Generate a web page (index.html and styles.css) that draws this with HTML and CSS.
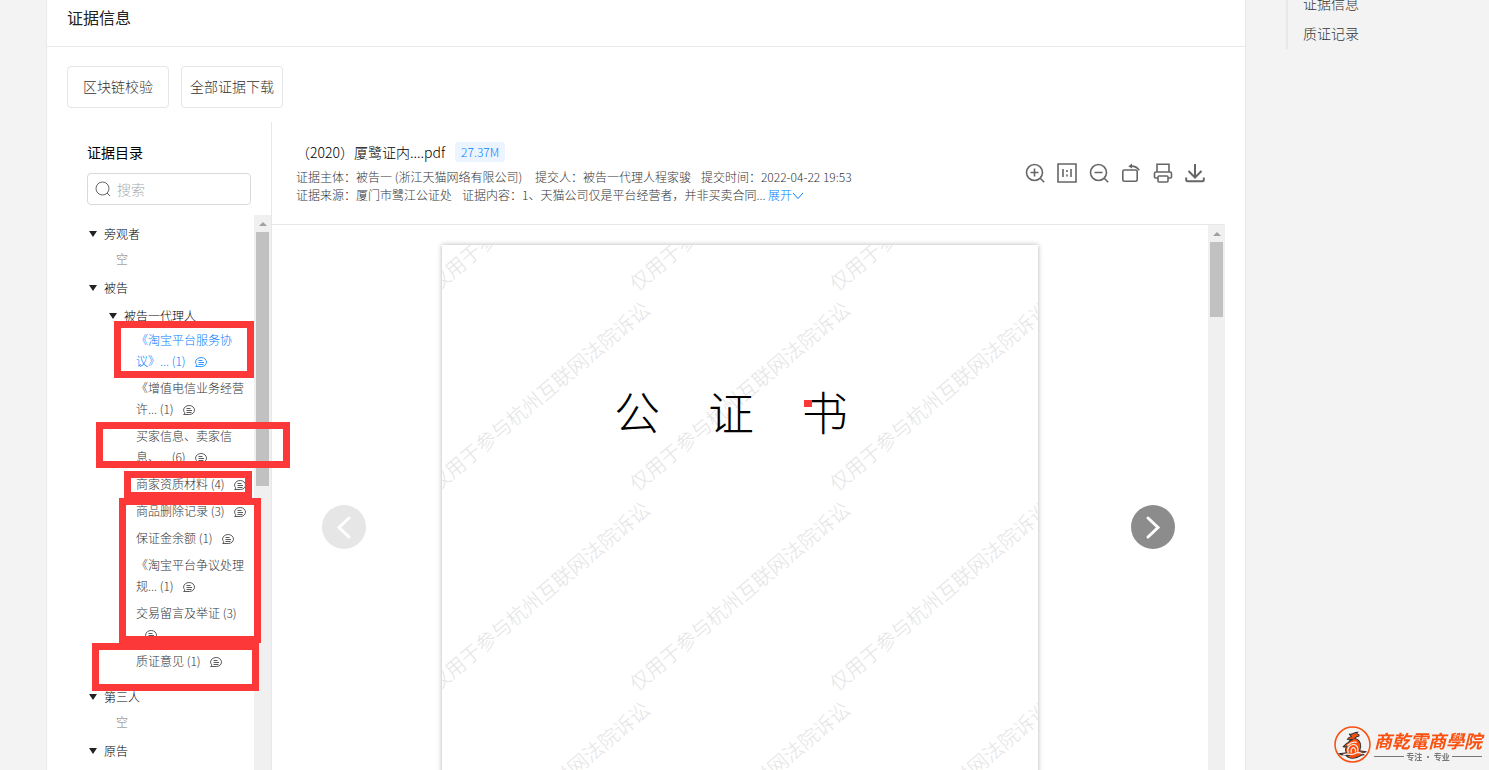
FILE: index.html
```html
<!DOCTYPE html>
<html lang="zh-CN">
<head>
    <meta charset="UTF-8">
    <meta name="viewport" content="width=device-width, initial-scale=1.0">
    <title>证据信息</title>
    <link rel="stylesheet" href="styles.css">
</head>
<body>
    <svg class="sprite" aria-hidden="true">
        <symbol id="icon-comment" viewBox="0 0 12 12">
            <path d="M.6 10.500h5.600c3.200 0 5.300-1.900 5.300-4.400S9.200 1.500 6.200 1.500.6 3.400.6 6c0 1.400.6 2.300 1.500 3.100L.6 10.500z" />
            <path d="M3.500 4.500h4M3.500 6.500h5.500M3.500 8.500h5" />
        </symbol>
    </svg>

    <main class="card">
        <h1 class="card-title">证据信息</h1>

        <div class="actions">
            <button class="btn">区块链校验</button>
            <button class="btn">全部证据下载</button>
        </div>

        <div class="evidence">
            <section class="catalog">
                <h2 class="catalog-title">证据目录</h2>
                <div class="search">
                    <svg class="search-icon" viewBox="0 0 16 16"><circle cx="7.500" cy="7.500" r="6.500" /><path d="M12 12l3 3" /></svg>
                    <input class="search-input" type="text" placeholder="搜索" aria-label="搜索">
                </div>

                <div class="catalog-body">
                    <div class="tree">
                        <button class="node">旁观者</button>
                        <p class="empty">空</p>
                        <button class="node">被告</button>
                        <button class="node node-sub">被告一代理人</button>
                        <ul class="files">
                            <li><a href="#" class="file active">《淘宝平台服务协<br>议》... (1)<svg class="comment"><use href="#icon-comment" /></svg></a></li>
                            <li><a href="#" class="file">《增值电信业务经营<br>许... (1)<svg class="comment"><use href="#icon-comment" /></svg></a></li>
                            <li><a href="#" class="file">买家信息、卖家信<br>息、... (6)<svg class="comment"><use href="#icon-comment" /></svg></a></li>
                            <li><a href="#" class="file">商家资质材料 (4)<svg class="comment"><use href="#icon-comment" /></svg></a></li>
                            <li><a href="#" class="file">商品删除记录 (3)<svg class="comment"><use href="#icon-comment" /></svg></a></li>
                            <li><a href="#" class="file">保证金余额 (1)<svg class="comment"><use href="#icon-comment" /></svg></a></li>
                            <li><a href="#" class="file">《淘宝平台争议处理<br>规... (1)<svg class="comment"><use href="#icon-comment" /></svg></a></li>
                            <li><a href="#" class="file">交易留言及举证 (3)<br><svg class="comment"><use href="#icon-comment" /></svg></a></li>
                            <li><a href="#" class="file">质证意见 (1)<svg class="comment"><use href="#icon-comment" /></svg></a></li>
                        </ul>
                        <button class="node node-after">第三人</button>
                        <p class="empty">空</p>
                        <button class="node">原告</button>
                    </div>
                    <div class="scrollbar">
                        <div class="scroll-thumb catalog-thumb"></div>
                    </div>
                </div>
            </section>

            <section class="viewer">
                <header class="viewer-header">
                    <div class="doc-info">
                        <div class="doc-name">
                            <h2>（2020）厦鹭证内....pdf</h2>
                            <span class="size">27.37M</span>
                        </div>
                        <p class="meta">
                            <span>证据主体：被告一 (浙江天猫网络有限公司)&nbsp;</span>
                            <span>提交人：被告一代理人程家骏</span>
                            <span>提交时间：2022-04-22 19:53</span>
                        </p>
                        <p class="meta">
                            <span>证据来源：厦门市鹭江公证处</span>
                            <span>证据内容：1、天猫公司仅是平台经营者，并非买卖合同... <a href="#" class="expand">展开<svg viewBox="0 0 12 12"><path d="M1 3l5 5.500L11 3" /></svg></a></span>
                        </p>
                    </div>
                    <div class="tools">
                        <button class="tool" aria-label="放大"><svg viewBox="0 0 20 20"><circle cx="9.500" cy="9.500" r="8" /><path d="M15.200 15.200l4 4M9.500 5.500v8M5.500 9.500h8" /></svg></button>
                        <button class="tool" aria-label="原始大小"><svg viewBox="0 0 20 20"><path d="M1 1h18v18H1zM6 6v8M14 6v8M10 7v2M10 11.500v2" /></svg></button>
                        <button class="tool" aria-label="缩小"><svg viewBox="0 0 20 20"><circle cx="9.500" cy="9.500" r="8" /><path d="M15.200 15.200l4 4M5.500 9.500h8" /></svg></button>
                        <button class="tool" aria-label="旋转"><svg viewBox="0 0 20 20"><rect x="1.800" y="7" width="14.400" height="11.200" rx="1.500" /><path d="M9 3.200c4-.5 7 .8 9.200 4" /><path class="solid" d="M7.300 3.200L11 .5v5z" /></svg></button>
                        <button class="tool" aria-label="打印"><svg viewBox="0 0 20 20"><path d="M4 9V1.200h12V9M5 15H2.500Q1.500 15 1.500 14v-3.500Q1.500 9 3 9h14q1.500 0 1.500 1.500V14q0 1-1 1H15" /><rect x="5" y="13" width="10" height="6" rx="1" /></svg></button>
                        <button class="tool" aria-label="下载"><svg class="bold" viewBox="0 0 20 20"><path d="M10 1v13M3.500 8l6.500 6.500L16.500 8M1.200 14.500v2.200q0 1.500 1.500 1.500h14.600q1.500 0 1.500-1.500v-2.200" /></svg></button>
                    </div>
                </header>

                <div class="viewer-body">
                    <div class="stage">
                        <article class="paper">
                            <svg class="watermark" viewBox="0 0 596 842" aria-hidden="true">
                                <defs>
                                    <text id="mark" transform="rotate(-40)" x="-10" y="6">仅用于参与杭州互联网法院诉讼</text>
                                </defs>
                                <use href="#mark" x="-1" y="36" />
                                <use href="#mark" x="199" y="36" />
                                <use href="#mark" x="399" y="36" />
                                <use href="#mark" x="-1" y="236" />
                                <use href="#mark" x="199" y="236" />
                                <use href="#mark" x="399" y="236" />
                                <use href="#mark" x="-1" y="436" />
                                <use href="#mark" x="199" y="436" />
                                <use href="#mark" x="399" y="436" />
                                <use href="#mark" x="-1" y="636" />
                                <use href="#mark" x="199" y="636" />
                                <use href="#mark" x="399" y="636" />
                            </svg>
                            <h3 class="paper-title"><span>公</span><span>证</span><span>书</span></h3>
                        </article>
                    </div>
                    <div class="scrollbar">
                        <div class="scroll-thumb viewer-thumb"></div>
                    </div>
                    <button class="pager prev" aria-label="上一份" disabled><svg viewBox="0 0 44 44"><path d="M27 13l-10 9.500L27 32" /></svg></button>
                    <button class="pager next" aria-label="下一份"><svg viewBox="0 0 44 44"><path d="M17 13l10 9.500L17 32" /></svg></button>
                </div>
            </section>
        </div>
    </main>

    <aside class="anchor">
        <nav class="anchor-nav">
            <a href="#">证据信息</a>
            <a href="#">质证记录</a>
        </nav>
    </aside>

    <!-- red highlights drawn over the page -->
    <div class="highlight highlight-1"></div>
    <div class="highlight highlight-2"></div>
    <div class="highlight highlight-3"></div>
    <div class="highlight highlight-4"></div>
    <div class="highlight highlight-5"></div>
    <div class="highlight-dot"></div>

    <div class="brand">
        <svg class="brand-logo" viewBox="0 0 36 36">
            <circle cx="18" cy="18" r="17" fill="none" stroke="#f9500f" stroke-width="1.500" />
            <path fill="#f9500f" d="M5 27c3-1 5 0 7-1-1-2-1-4 0-6-1 0-2 1-3 0 2-1 2-3 5-4 1-2 3-2 4-3-2 0-3 1-5 0 1-2 3-2 4-3-1-1-2-1-2-2 3 1 4-2 8-2-1 1-1 1 0 2 1 0 2 1 1 2-2 0-3 1-4 2 4 1 6 4 6 8l-1 4c2 1 4 0 6 1-2 1-4 1-5 2 1 0 2 0 3 1-3 0-5 2-8 3-3 1-7 0-9-2 2 0 3-1 4-1-4 0-8 1-11-1z" />
            <path fill="none" stroke="#f3f3f3" stroke-width="1.200" d="M14 26c-2-4 1-8 5-8 3 0 5 3 4 7M17 26c-1-2 0-5 2-5 1 0 2 2 2 4M13 19c3-3 6-4 9-3M9 28c5-2 8 1 11-1s5-1 8 0" />
        </svg>
        <div class="brand-text">
            <strong>商乾電商學院</strong>
            <small>专注 · 专业</small>
        </div>
    </div>
</body>
</html>
```
FILE: styles.css
```css
* {
    margin: 0;
    padding: 0;
    box-sizing: border-box;
}

body {
    display: flex;
    height: 100vh;
    overflow: hidden;
    background-color: #f3f3f3;
    color: #333333;
    font-family: "Noto Sans CJK SC", sans-serif;
    font-size: 12px;
    font-weight: 300;
}

button,
input {
    font: inherit;
    color: inherit;
    border: none;
    background: none;
}

button {
    cursor: pointer;
}

a {
    color: inherit;
    text-decoration: none;
}

svg {
    fill: none;
    stroke: currentColor;
}

.sprite {
    position: absolute;
    width: 0;
    height: 0;
}

/* card */
.card {
    flex: 1;
    min-width: 0;
    margin-left: 46px;
    display: flex;
    flex-direction: column;
    background-color: white;
    border: 1px solid #e8e8e8;
    border-width: 0 1px;
}

.card-title {
    padding: 0 20px 12px;
    line-height: 34px;
    font-size: 16px;
    font-weight: 400;
    color: #222222;
    border-bottom: 1px solid #e8e8e8;
}

.actions {
    display: flex;
    gap: 12px;
    padding: 19px 20px 14px;
}

.btn {
    width: 102px;
    height: 42px;
    padding-bottom: 2px;
    border: 1px solid #e6e6e6;
    border-radius: 4px;
    font-size: 14px;
    white-space: nowrap;
}

.evidence {
    flex: 1;
    min-height: 0;
    display: flex;
    padding: 0 20px;
}

/* catalog */
.catalog {
    width: 205px;
    flex-shrink: 0;
    display: flex;
    flex-direction: column;
    padding: 20px 0 0 20px;
    border-right: 1px solid #e8e8e8;
}

.catalog-title {
    line-height: 20px;
    font-size: 14px;
    font-weight: 400;
    color: black;
}

.search {
    display: flex;
    align-items: center;
    gap: 6px;
    height: 32px;
    margin: 11px 20px 10px 0;
    padding: 0 7px;
    border: 1px solid #d9d9d9;
    border-radius: 4px;
}

.search-icon {
    width: 16px;
    height: 16px;
    flex-shrink: 0;
    color: #666666;
}

.search-input {
    width: 100%;
    min-width: 0;
    font-size: 14px;
    outline: none;
}

.search-input::placeholder {
    color: #aaaaaa;
}

.catalog-body {
    flex: 1;
    min-height: 0;
    display: flex;
}

.tree {
    flex: 1;
    min-width: 0;
    padding-top: 8px;
    overflow: hidden;
}

.node {
    display: flex;
    align-items: center;
    gap: 7px;
    margin-top: 7px;
    padding-left: 2px;
    line-height: 22px;
    color: black;
}

.node::before {
    content: "";
    border: 4px solid transparent;
    border-top: 6px solid #222222;
    border-bottom: none;
}

.node:first-child {
    margin-top: 0;
}

.node-sub {
    margin-top: 6px;
    padding-left: 22px;
}

.node-after {
    margin-top: 11px;
}

.empty {
    margin-top: 3px;
    padding-left: 29px;
    line-height: 22px;
    color: #777777;
}

.files {
    list-style: none;
    padding-left: 49px;
}

.file {
    display: block;
    padding: 2px 0 4px;
    line-height: 21px;
    white-space: nowrap;
}

.active {
    color: #0080ff;
}

.comment {
    width: 12px;
    height: 12px;
    margin-left: 9px;
    vertical-align: -2px;
    opacity: 0.8;
}

/* scrollbars */
.scrollbar {
    width: 17px;
    flex-shrink: 0;
    display: flex;
    flex-direction: column;
    align-items: center;
    background-color: #f0f0f0;
}

.scrollbar::before {
    content: "";
    margin: 7px 0 6px;
    border: 4px solid transparent;
    border-top: none;
    border-bottom-color: #a0a0a0;
}

.scroll-thumb {
    width: 13px;
    background-color: #c1c1c1;
}

.catalog-thumb {
    height: 254px;
}

.viewer-thumb {
    height: 75px;
}

/* viewer */
.viewer {
    flex: 1;
    min-width: 0;
    display: flex;
    flex-direction: column;
}

.viewer-header {
    display: flex;
    justify-content: space-between;
    align-items: center;
    padding: 20px 20px 20px 24px;
    border-bottom: 1px solid #e8e8e8;
}

.doc-name {
    display: flex;
    align-items: flex-start;
    gap: 10px;
    height: 22px;
    margin-bottom: 4px;
}

.doc-name h2 {
    line-height: 20px;
    font-size: 14px;
    font-weight: 300;
    color: black;
}

.size {
    padding: 0 6px;
    line-height: 20px;
    border-radius: 4px;
    background-color: #ecf5ff;
    color: #0080ff;
}

.meta {
    display: flex;
    gap: 10px;
    line-height: 18px;
    white-space: nowrap;
}

.expand {
    color: #0080ff;
}

.expand svg {
    width: 12px;
    height: 12px;
    vertical-align: -2px;
}

.tools {
    display: flex;
    gap: 12px;
    color: #666666;
}

.tool,
.tool svg {
    display: block;
    width: 20px;
    height: 20px;
}

.tool svg {
    stroke-width: 1.6;
}

.tool .bold {
    stroke-width: 2;
}

.tool .solid {
    fill: currentColor;
    stroke: none;
}

.viewer-body {
    flex: 1;
    min-height: 0;
    display: flex;
    position: relative;
}

.stage {
    flex: 1;
    min-width: 0;
    display: flex;
    justify-content: center;
    padding-top: 20px;
    overflow: hidden;
}

.paper {
    position: relative;
    width: 596px;
    height: 842px;
    flex-shrink: 0;
    background-color: white;
    box-shadow: 0 0 5px rgba(0, 0, 0, 0.3);
}

.watermark {
    position: absolute;
    top: 0;
    left: 0;
    width: 100%;
    height: 100%;
    overflow: hidden;
    fill: #e4e4e4;
    stroke: none;
    font-size: 20px;
}

.paper-title {
    position: relative;
    display: flex;
    justify-content: center;
    gap: 48px;
    padding: 135px 18px 0 0;
    line-height: 60px;
    font-size: 46px;
    font-weight: 300;
    color: black;
}

.pager {
    position: absolute;
    top: 280px;
    width: 44px;
    height: 44px;
    border-radius: 50%;
    background-color: #8c8c8c;
    color: white;
}

.pager svg {
    display: block;
    stroke-width: 3;
    stroke-linecap: round;
}

.prev {
    left: 50px;
    background-color: #e6e6e6;
}

.next {
    right: 50px;
}

/* anchor menu */
.anchor {
    width: 203px;
    margin-left: 40px;
    flex-shrink: 0;
}

.anchor-nav {
    display: flex;
    flex-direction: column;
    justify-content: flex-end;
    height: 49px;
    padding: 0 0 1px 15px;
    border-left: 2px solid #e8e8e8;
    font-size: 14px;
}

.anchor-nav a {
    flex-shrink: 0;
    line-height: 30px;
}

/* highlights */
.highlight {
    position: absolute;
    border: 7px solid #fd3838;
}

.highlight-1 {
    left: 114px;
    top: 321px;
    width: 140px;
    height: 57px;
}

.highlight-2 {
    left: 96px;
    top: 422px;
    width: 194px;
    height: 46px;
}

.highlight-3 {
    left: 124px;
    top: 471px;
    width: 128px;
    height: 28px;
}

.highlight-4 {
    left: 119px;
    top: 498px;
    width: 142px;
    height: 145px;
}

.highlight-5 {
    left: 92px;
    top: 643px;
    width: 167px;
    height: 48px;
}

.highlight-dot {
    position: absolute;
    left: 804px;
    top: 400px;
    width: 8px;
    height: 7px;
    background-color: #fd3838;
}

/* brand */
.brand {
    position: fixed;
    right: 7px;
    bottom: 7px;
    display: flex;
    align-items: center;
    gap: 3px;
}

.brand-logo {
    width: 37px;
    height: 37px;
}

.brand-text strong {
    display: block;
    line-height: 24px;
    font-size: 18px;
    font-weight: 700;
    font-style: italic;
    color: #f9500f;
}

.brand-text small {
    display: flex;
    align-items: center;
    gap: 2px;
    line-height: 10px;
    font-size: 8px;
    font-weight: 700;
    color: #777777;
}

.brand-text small::before,
.brand-text small::after {
    content: "";
    flex: 1;
    height: 1px;
    background-color: #777777;
}
```
